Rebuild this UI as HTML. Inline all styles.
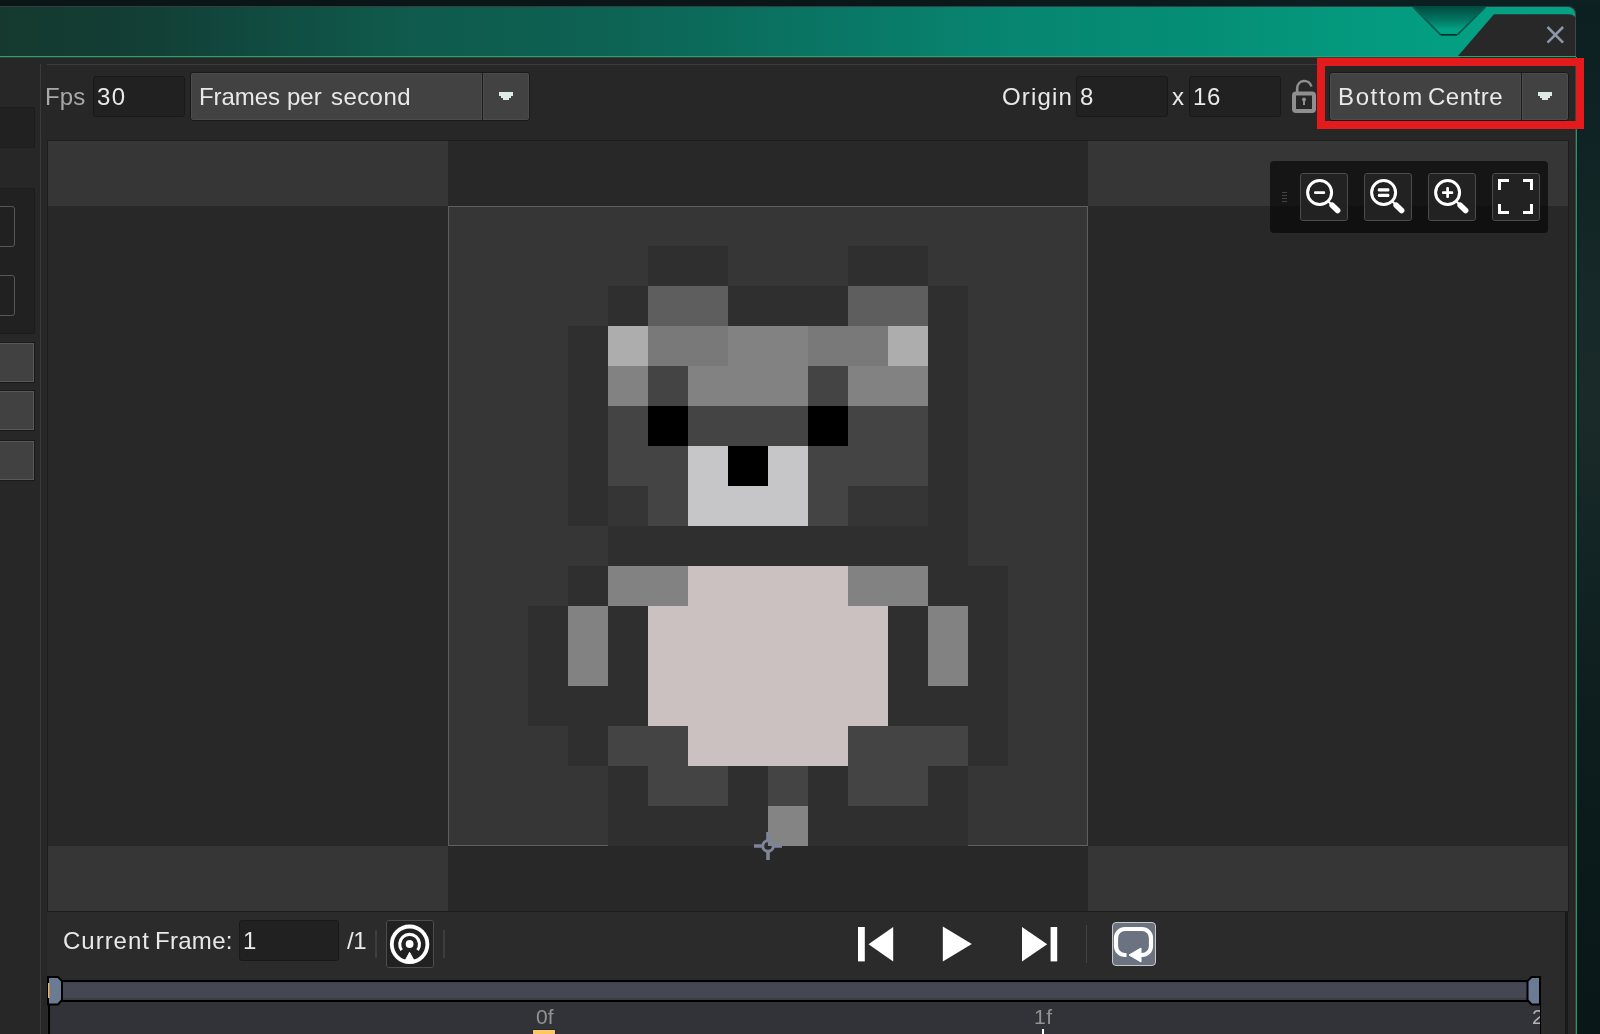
<!DOCTYPE html>
<html>
<head>
<meta charset="utf-8">
<title>Sprite Editor</title>
<style>
*{box-sizing:border-box;margin:0;padding:0}
html,body{width:1600px;height:1034px;overflow:hidden;background:#0d2121;}
body{position:relative;font-family:"Liberation Sans",sans-serif;color:#e8e8e8;}
.abs{position:absolute;display:block}
.txt{position:absolute;white-space:nowrap;font-size:24px;line-height:28px;color:#e9e9e9;will-change:transform}
.inp{position:absolute;background:#212121;border:1px solid #191919;border-radius:3px}
.dd{position:absolute;background:#424242;border:1px solid #191919;border-radius:3px;box-shadow:inset 0 0 0 1px #4c4c4c}
.zb{width:48px;height:48px;background:#222222;border:1px solid #4c4c4c;border-radius:3px}
.zb svg{left:-1px !important;top:-1px !important}
.sep{position:absolute;width:2px;background:#3d3d3d}
</style>
</head>
<body>

<!-- outer dark background top band -->
<div class="abs" style="left:0;top:0;width:1600px;height:6px;background:linear-gradient(90deg,#0a1518 0,#0a1617 800px,#0c1e20 1300px,#0d2122 1600px)"></div>

<!-- outer strip right of window (soft vertical gradient) -->
<div class="abs" style="left:1576px;top:6px;width:24px;height:1028px;background:linear-gradient(180deg,#0d2021 0,#0f2324 124px,#172928 294px,#192a29 414px,#132424 554px,#0e1e1f 694px,#0a191a 874px,#0a1718 1028px)"></div>
<!-- window title bar (teal gradient) -->
<div class="abs" style="left:0;top:6px;width:1576px;height:51px;border-top:1px solid #383c3e;border-right:1px solid #464646;border-top-right-radius:8px;
 background:linear-gradient(90deg,#15392f 0px,#123f36 150px,#0f5a4c 400px,#0d6253 600px,#0a7362 800px,#078570 1000px,#058e76 1200px,#04997e 1350px,#03a084 1480px,#03a286 1577px);"></div>
<!-- green line under title bar -->
<div class="abs" style="left:0;top:56px;width:1576px;height:1px;background:#17ab6c"></div>

<!-- main panel -->
<div class="abs" style="left:0;top:57px;width:1576px;height:977px;background:#272727"></div>
<div class="abs" style="left:0;top:57px;width:1460px;height:1px;background:#40373a"></div>
<div class="abs" style="left:1575px;top:57px;width:1px;height:977px;background:#453c3f"></div>
<!-- bottom controls panel -->
<div class="abs" style="left:47px;top:912px;width:1518px;height:122px;background:#2b2b2b"></div>
<div class="abs" style="left:1565px;top:912px;width:3px;height:122px;background:#191919"></div>
<!-- right green border -->
<div class="abs" style="left:1576px;top:57px;width:1px;height:977px;background:#10a468"></div>
<div class="abs" style="left:1577px;top:57px;width:1px;height:977px;background:rgba(8,14,18,0.55)"></div>

<!-- title notch + tab -->
<svg class="abs" style="left:1400px;top:0" width="200" height="60">
  <defs>
    <linearGradient id="ng" x1="0" y1="0" x2="0" y2="1">
      <stop offset="0" stop-color="#014a40"/>
      <stop offset="0.45" stop-color="#02735f"/>
      <stop offset="0.8" stop-color="#03a084"/>
      <stop offset="1" stop-color="#03a286"/>
    </linearGradient>
  </defs>
  <path d="M13 6 L86 6 L58 35 L41 35 Z" fill="url(#ng)"/>
  <path d="M13 7 L40.500 34.700 M57.500 34.700 L85.500 7" fill="none" stroke="#06594c" stroke-width="1.700"/>
  <path d="M40.500 34.800 H57.300" fill="none" stroke="#012f29" stroke-width="1.700"/>
  <path d="M94 14.300 L169 14.300 Q176 14.300 176 21.300 L176 56 L58 56 Z" fill="#282828"/>
  <path d="M175.500 19.500 V56" stroke="#464646" stroke-width="1" fill="none"/>
  <path d="M147.500 27 L163.100 42.600 M163.100 27 L147.500 42.600" stroke="#8d97a8" stroke-width="2.500" fill="none"/>
</svg>

<!-- panel guide lines -->
<div class="abs" style="left:40px;top:64px;width:1px;height:970px;background:#3b3b3b"></div>
<div class="abs" style="left:47px;top:64px;width:1521px;height:1px;background:#3b3b3b"></div>

<!-- left strip widgets -->
<div class="abs" style="left:-2px;top:107px;width:37px;height:41px;background:#212121;border:1px solid #1c1c1c;border-radius:2px"></div>
<div class="abs" style="left:-2px;top:188px;width:37px;height:146px;background:#212121;border:1px solid #1c1c1c;border-radius:2px"></div>
<div class="abs" style="left:-2px;top:206px;width:17px;height:41px;border:1px solid #575757;border-radius:3px"></div>
<div class="abs" style="left:-2px;top:275px;width:17px;height:41px;border:1px solid #575757;border-radius:3px"></div>
<div class="abs" style="left:-2px;top:342px;width:37px;height:41px;background:#414141;border:1px solid #1a1a1a;box-shadow:inset 0 0 0 1px #585858"></div>
<div class="abs" style="left:-2px;top:390px;width:37px;height:41px;background:#414141;border:1px solid #1a1a1a;box-shadow:inset 0 0 0 1px #585858"></div>
<div class="abs" style="left:-2px;top:440px;width:37px;height:41px;background:#414141;border:1px solid #1a1a1a;box-shadow:inset 0 0 0 1px #585858"></div>

<!-- TOPBAR -->
<div class="inp" style="left:93px;top:76px;width:92px;height:41px"></div>
<div class="dd" style="left:190px;top:72px;width:340px;height:49px"></div>
<div class="abs" style="left:482px;top:73px;width:1px;height:47px;background:#1c1c1c;box-shadow:1px 0 0 #4c4c4c,-1px 0 0 #4a4a4a"></div>
<svg class="abs" style="left:499px;top:92px" width="14" height="8" shape-rendering="crispEdges"><path d="M0 0H14V4H12V6H10V8H4V6H2V4H0Z" fill="#deebe4"/></svg>

<!-- canvas -->
<div class="abs" style="left:47px;top:140px;width:1522px;height:772px;background:#1d1d1d"></div>
<div class="abs" style="left:48px;top:141px;width:1520px;height:770px;background:#363636"></div>
<div class="abs" style="left:448px;top:141px;width:640px;height:65px;background:#282828"></div>
<div class="abs" style="left:448px;top:846px;width:640px;height:65px;background:#282828"></div>
<div class="abs" style="left:48px;top:206px;width:400px;height:640px;background:#282828"></div>
<div class="abs" style="left:1088px;top:206px;width:480px;height:640px;background:#282828"></div>
<div class="abs" style="left:448px;top:206px;width:640px;height:640px;background:#363636"></div>
<svg class="abs" style="left:448px;top:206px" width="640" height="640" shape-rendering="crispEdges"><rect x="200" y="40" width="80" height="40" fill="#2f2f2f"/><rect x="400" y="40" width="80" height="40" fill="#2f2f2f"/><rect x="160" y="80" width="40" height="40" fill="#2f2f2f"/><rect x="200" y="80" width="80" height="40" fill="#5e5e5e"/><rect x="280" y="80" width="120" height="40" fill="#2f2f2f"/><rect x="400" y="80" width="80" height="40" fill="#5e5e5e"/><rect x="480" y="80" width="40" height="40" fill="#2f2f2f"/><rect x="120" y="120" width="40" height="40" fill="#2f2f2f"/><rect x="160" y="120" width="40" height="40" fill="#adadad"/><rect x="200" y="120" width="80" height="40" fill="#797979"/><rect x="280" y="120" width="80" height="40" fill="#828282"/><rect x="360" y="120" width="80" height="40" fill="#797979"/><rect x="440" y="120" width="40" height="40" fill="#adadad"/><rect x="480" y="120" width="40" height="40" fill="#2f2f2f"/><rect x="120" y="160" width="40" height="40" fill="#2f2f2f"/><rect x="160" y="160" width="40" height="40" fill="#828282"/><rect x="200" y="160" width="40" height="40" fill="#444444"/><rect x="240" y="160" width="120" height="40" fill="#828282"/><rect x="360" y="160" width="40" height="40" fill="#444444"/><rect x="400" y="160" width="80" height="40" fill="#828282"/><rect x="480" y="160" width="40" height="40" fill="#2f2f2f"/><rect x="120" y="200" width="40" height="40" fill="#2f2f2f"/><rect x="160" y="200" width="40" height="40" fill="#444444"/><rect x="200" y="200" width="40" height="40" fill="#000000"/><rect x="240" y="200" width="120" height="40" fill="#444444"/><rect x="360" y="200" width="40" height="40" fill="#000000"/><rect x="400" y="200" width="80" height="40" fill="#444444"/><rect x="480" y="200" width="40" height="40" fill="#2f2f2f"/><rect x="120" y="240" width="40" height="40" fill="#2f2f2f"/><rect x="160" y="240" width="80" height="40" fill="#444444"/><rect x="240" y="240" width="40" height="40" fill="#c6c6c8"/><rect x="280" y="240" width="40" height="40" fill="#000000"/><rect x="320" y="240" width="40" height="40" fill="#c6c6c8"/><rect x="360" y="240" width="120" height="40" fill="#444444"/><rect x="480" y="240" width="40" height="40" fill="#2f2f2f"/><rect x="120" y="280" width="40" height="40" fill="#2f2f2f"/><rect x="160" y="280" width="40" height="40" fill="#353535"/><rect x="200" y="280" width="40" height="40" fill="#444444"/><rect x="240" y="280" width="120" height="40" fill="#c6c6c8"/><rect x="360" y="280" width="40" height="40" fill="#444444"/><rect x="400" y="280" width="80" height="40" fill="#353535"/><rect x="480" y="280" width="40" height="40" fill="#2f2f2f"/><rect x="160" y="320" width="360" height="40" fill="#2f2f2f"/><rect x="120" y="360" width="40" height="40" fill="#2f2f2f"/><rect x="160" y="360" width="80" height="40" fill="#828282"/><rect x="240" y="360" width="160" height="40" fill="#cbc1c1"/><rect x="400" y="360" width="80" height="40" fill="#828282"/><rect x="480" y="360" width="80" height="40" fill="#2f2f2f"/><rect x="80" y="400" width="40" height="40" fill="#2f2f2f"/><rect x="120" y="400" width="40" height="40" fill="#828282"/><rect x="160" y="400" width="40" height="40" fill="#2f2f2f"/><rect x="200" y="400" width="240" height="40" fill="#cbc1c1"/><rect x="440" y="400" width="40" height="40" fill="#2f2f2f"/><rect x="480" y="400" width="40" height="40" fill="#828282"/><rect x="520" y="400" width="40" height="40" fill="#2f2f2f"/><rect x="80" y="440" width="40" height="40" fill="#2f2f2f"/><rect x="120" y="440" width="40" height="40" fill="#828282"/><rect x="160" y="440" width="40" height="40" fill="#2f2f2f"/><rect x="200" y="440" width="240" height="40" fill="#cbc1c1"/><rect x="440" y="440" width="40" height="40" fill="#2f2f2f"/><rect x="480" y="440" width="40" height="40" fill="#828282"/><rect x="520" y="440" width="40" height="40" fill="#2f2f2f"/><rect x="80" y="480" width="120" height="40" fill="#2f2f2f"/><rect x="200" y="480" width="240" height="40" fill="#cbc1c1"/><rect x="440" y="480" width="120" height="40" fill="#2f2f2f"/><rect x="120" y="520" width="40" height="40" fill="#2f2f2f"/><rect x="160" y="520" width="80" height="40" fill="#444444"/><rect x="240" y="520" width="160" height="40" fill="#cbc1c1"/><rect x="400" y="520" width="120" height="40" fill="#444444"/><rect x="520" y="520" width="40" height="40" fill="#2f2f2f"/><rect x="160" y="560" width="40" height="40" fill="#2f2f2f"/><rect x="200" y="560" width="80" height="40" fill="#444444"/><rect x="280" y="560" width="40" height="40" fill="#2f2f2f"/><rect x="320" y="560" width="40" height="40" fill="#444444"/><rect x="360" y="560" width="40" height="40" fill="#2f2f2f"/><rect x="400" y="560" width="80" height="40" fill="#444444"/><rect x="480" y="560" width="40" height="40" fill="#2f2f2f"/><rect x="160" y="600" width="160" height="40" fill="#2f2f2f"/><rect x="320" y="600" width="40" height="40" fill="#848484"/><rect x="360" y="600" width="160" height="40" fill="#2f2f2f"/></svg>
<div class="abs" style="left:448px;top:206px;width:640px;height:640px;border:1px solid #606060;border-bottom:none"></div>
<div class="abs" style="left:448px;top:845px;width:160px;height:1px;background:#606060"></div>
<div class="abs" style="left:968px;top:845px;width:120px;height:1px;background:#606060"></div>

<!-- ORIGIN -->
<div class="inp" style="left:1076px;top:76px;width:92px;height:41px"></div>
<div class="inp" style="left:1189px;top:76px;width:92px;height:41px"></div>
<svg class="abs" style="left:1288px;top:76px" width="32" height="40">
  <path d="M9.200 17 V12 A7.200 7.200 0 0 1 23.400 10.500" fill="none" stroke="#8f8f8f" stroke-width="2.600"/>
  <rect x="6" y="17.500" width="20" height="17.500" rx="2" fill="none" stroke="#8f8f8f" stroke-width="4"/>
  <circle cx="16" cy="23.500" r="2" fill="#8f8f8f"/>
  <rect x="15" y="24" width="2" height="5" fill="#8f8f8f"/>
</svg>
<div class="dd" style="left:1329px;top:72px;width:240px;height:49px"></div>
<div class="abs" style="left:1521px;top:73px;width:1px;height:47px;background:#1c1c1c;box-shadow:1px 0 0 #4c4c4c,-1px 0 0 #4a4a4a"></div>
<svg class="abs" style="left:1538px;top:92px" width="14" height="8" shape-rendering="crispEdges"><path d="M0 0H14V4H12V6H10V8H4V6H2V4H0Z" fill="#deebe4"/></svg>
<div class="abs" style="left:1317px;top:58px;width:267px;height:71px;border:8px solid #e41b1c"></div>
<!-- ZOOMBAR -->
<div class="abs" style="left:1270px;top:161px;width:278px;height:72px;background:rgba(0,0,0,0.6);border-radius:4px"></div>
<div class="abs" style="left:1282px;top:192px;width:5px;height:1px;background:#444;box-shadow:0 3px 0 #444,0 6px 0 #444,0 9px 0 #444"></div>
<div class="abs zb" style="left:1300px;top:173px"><svg class="abs" style="left:0;top:0" width="48" height="48"><circle cx="19.600" cy="19.500" r="12" fill="none" stroke="#fff" stroke-width="3"/><path d="M27.500 27.500 L33 33" stroke="#fff" stroke-width="2.200"/><path d="M32.200 32.200 L37.600 37.600" stroke="#fff" stroke-width="5.600" stroke-linecap="round"/><rect x="14" y="18.200" width="11.200" height="2.800" rx="1.200" fill="#fff"/></svg></div>
<div class="abs zb" style="left:1364px;top:173px"><svg class="abs" style="left:0;top:0" width="48" height="48"><circle cx="19.600" cy="19.500" r="12" fill="none" stroke="#fff" stroke-width="3"/><path d="M27.500 27.500 L33 33" stroke="#fff" stroke-width="2.200"/><path d="M32.200 32.200 L37.600 37.600" stroke="#fff" stroke-width="5.600" stroke-linecap="round"/><rect x="13.800" y="15.200" width="11.600" height="3.200" rx="1.200" fill="#fff"/><rect x="13.800" y="20.800" width="11.600" height="3.200" rx="1.200" fill="#fff"/></svg></div>
<div class="abs zb" style="left:1428px;top:173px"><svg class="abs" style="left:0;top:0" width="48" height="48"><circle cx="19.600" cy="19.500" r="12" fill="none" stroke="#fff" stroke-width="3"/><path d="M27.500 27.500 L33 33" stroke="#fff" stroke-width="2.200"/><path d="M32.200 32.200 L37.600 37.600" stroke="#fff" stroke-width="5.600" stroke-linecap="round"/><rect x="14" y="18.200" width="11.200" height="2.700" rx="1" fill="#fff"/><rect x="18.250" y="13.900" width="2.700" height="11.200" rx="1" fill="#fff"/></svg></div>
<div class="abs zb" style="left:1492px;top:173px"><svg class="abs" style="left:0;top:0" width="48" height="48" shape-rendering="crispEdges"><path d="M7.500 16.500 V7.500 H16.500 M30.500 7.500 H39.500 V16.500 M39.500 30.500 V39.500 H30.500 M16.500 39.500 H7.500 V30.500" fill="none" stroke="#fff" stroke-width="3"/></svg></div>
<!-- BOTTOM -->
<div class="inp" style="left:239px;top:920px;width:100px;height:41px"></div>
<div class="sep" style="left:375px;top:930px;height:28px"></div>
<div class="abs" style="left:386px;top:920px;width:48px;height:48px;background:#212121;border:1px solid #4c4c4c;border-radius:3px"></div>
<svg class="abs" style="left:386px;top:920px" width="48" height="48">
  <circle cx="23.600" cy="24.300" r="17.800" fill="none" stroke="#fff" stroke-width="3.800"/>
  <path d="M15.600 30.100 A9.900 9.900 0 1 1 31.600 30.100" fill="none" stroke="#fff" stroke-width="3.100"/>
  <circle cx="23.600" cy="24" r="3.900" fill="#fff"/>
  <path d="M23.600 32.300 L28.800 42 L18.400 42 Z" fill="#fff" stroke="#fff" stroke-width="1" stroke-linejoin="round"/>
</svg>
<div class="sep" style="left:443px;top:930px;height:28px"></div>
<!-- playback -->
<svg class="abs" style="left:850px;top:920px" width="320" height="50">
  <rect x="8" y="7" width="6.800" height="34.400" fill="#fff"/>
  <path d="M18.500 24.200 L43.200 7 L43.200 41.400 Z" fill="#fff"/>
  <path d="M92.800 6.600 L121.800 24.100 L92.800 41.600 Z" fill="#fff"/>
  <path d="M172 7 L197.200 24.200 L172 41.400 Z" fill="#fff"/>
  <rect x="200.600" y="7" width="6.600" height="34.400" fill="#fff"/>
  <rect x="236" y="5" width="1" height="38" fill="#434343"/>
</svg>
<!-- loop button -->
<div class="abs" style="left:1112px;top:922px;width:44px;height:44px;background:#6b7280;border:1px solid #c9c9c9;border-radius:4px"></div>
<svg class="abs" style="left:1112px;top:922px" width="44" height="44">
  <path d="M14.500 33 H13 A9 9 0 0 1 4 24 V16 A9 9 0 0 1 13 7 H30 A9 9 0 0 1 39 16 V24 A9 9 0 0 1 30 33 H27" fill="none" stroke="#fff" stroke-width="4.200"/>
  <path d="M17 33 L29 26 L29 40 Z" fill="#fff" stroke="#fff" stroke-width="1" stroke-linejoin="round"/>
</svg>
<!-- timeline scrollbar -->
<div class="abs" style="left:50px;top:1002px;width:1491px;height:32px;background:#323338"></div>
<div class="abs" style="left:48px;top:1002px;width:2px;height:32px;background:#000"></div>
<div class="abs" style="left:1540px;top:1004px;width:1px;height:30px;background:#000"></div>
<div class="abs" style="left:60px;top:980px;width:1468px;height:22px;background:#454852;border-top:2px solid #000;border-bottom:2px solid #000"></div>
<div class="abs" style="left:60px;top:982px;width:1468px;height:1px;background:#3e4149"></div>
<div class="abs" style="left:60px;top:998px;width:1468px;height:2px;background:#3c3e46"></div>
<svg class="abs" style="left:46px;top:974px" width="20" height="34">
  <path d="M2 3 H12 L16 7 V26 L12 30.500 H2 Z" fill="#6b7b94" stroke="#000" stroke-width="2" stroke-linejoin="miter"/>
  <rect x="2" y="9" width="1.400" height="15" fill="#f3b455"/>
</svg>
<svg class="abs" style="left:1524px;top:974px" width="20" height="34">
  <path d="M16 3 H7.500 L3.500 7 V26 L7.500 30.500 H16 Z" fill="#6b7b94" stroke="#000" stroke-width="2" stroke-linejoin="miter"/>
</svg>
<div class="txt" style="left:535.500px;top:1005px;font-size:21px;line-height:24px;color:#929292">0f</div>
<div class="txt" style="left:1033.500px;top:1005px;font-size:21px;line-height:24px;color:#929292;letter-spacing:0.5px">1f</div>
<div class="abs" style="left:1530px;top:1005px;width:10px;height:26px;overflow:hidden"><div class="txt" style="left:1.500px;top:0;font-size:21px;line-height:24px;color:#b4b4b4">2</div></div>
<div class="abs" style="left:532px;top:1029px;width:24px;height:6px;background:#fdc765;border:1px solid #1d2a36"></div>
<div class="abs" style="left:1042px;top:1029px;width:2px;height:5px;background:#fff"></div>
<!-- origin marker -->
<svg class="abs" style="left:748px;top:826px" width="40" height="40">
  <path d="M6 20 H14 M26 20 H34 M20 6 V14 M20 26 V34" stroke="#7f8499" stroke-width="3.600"/>
  <circle cx="20" cy="20" r="5.300" fill="none" stroke="#7f8499" stroke-width="3"/>
</svg>

<!-- WORDS -->
<div class="txt" style="left:45.0px;top:83px;letter-spacing:0.08px;color:#a9a9a9">Fps</div>
<div class="txt" style="left:96.9px;top:83px;letter-spacing:1.31px;color:#e9e9e9">30</div>
<div class="txt" style="left:199.1px;top:83px;letter-spacing:-0.08px;color:#e9e9e9">Frames</div>
<div class="txt" style="left:287.1px;top:83px;letter-spacing:-0.03px;color:#e9e9e9">per</div>
<div class="txt" style="left:330.7px;top:83px;letter-spacing:0.42px;color:#e9e9e9">second</div>
<div class="txt" style="left:1002.4px;top:83px;letter-spacing:1.16px;color:#e9e9e9">Origin</div>
<div class="txt" style="left:1079.7px;top:83px;letter-spacing:0.00px;color:#e9e9e9">8</div>
<div class="txt" style="left:1172.4px;top:83px;letter-spacing:0.00px;color:#e9e9e9">x</div>
<div class="txt" style="left:1193.0px;top:83px;letter-spacing:0.69px;color:#e9e9e9">16</div>
<div class="txt" style="left:1337.8px;top:83px;letter-spacing:1.63px;color:#e9e9e9">Bottom</div>
<div class="txt" style="left:1427.8px;top:83px;letter-spacing:0.53px;color:#e9e9e9">Centre</div>
<div class="txt" style="left:62.8px;top:927px;letter-spacing:0.99px;color:#e9e9e9">Current</div>
<div class="txt" style="left:154.7px;top:927px;letter-spacing:0.29px;color:#e9e9e9">Frame:</div>
<div class="txt" style="left:243.0px;top:927px;letter-spacing:0.00px;color:#e9e9e9">1</div>
<div class="txt" style="left:347.1px;top:927px;letter-spacing:-0.38px;color:#e9e9e9">/1</div>
<!-- /WORDS -->
</body>
</html>
